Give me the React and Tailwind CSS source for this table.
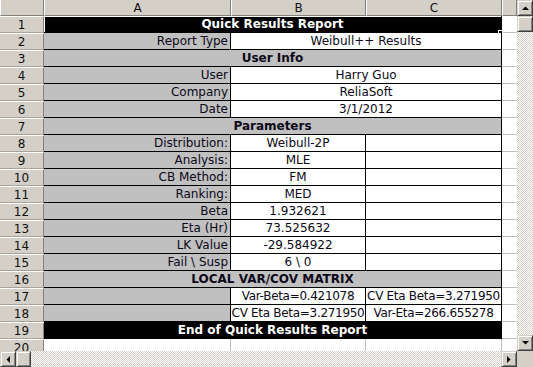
import React from "react";

const rows = [
  { t: "title", text: "Quick Results Report" },
  { t: "kv2", k: "Report Type", v: "Weibull++ Results" },
  { t: "section", text: "User Info" },
  { t: "kv2", k: "User", v: "Harry Guo" },
  { t: "kv2", k: "Company", v: "ReliaSoft" },
  { t: "kv2", k: "Date", v: "3/1/2012" },
  { t: "section", text: "Parameters" },
  { t: "kv", k: "Distribution:", v: "Weibull-2P" },
  { t: "kv", k: "Analysis:", v: "MLE" },
  { t: "kv", k: "CB Method:", v: "FM" },
  { t: "kv", k: "Ranking:", v: "MED" },
  { t: "kv", k: "Beta", v: "1.932621" },
  { t: "kv", k: "Eta (Hr)", v: "73.525632" },
  { t: "kv", k: "LK Value", v: "-29.584922" },
  { t: "kv", k: "Fail \\ Susp", v: "6 \\ 0" },
  { t: "section", text: "LOCAL VAR/COV MATRIX" },
  { t: "mat", b: "Var-Beta=0.421078", c: "CV Eta Beta=3.271950" },
  { t: "mat", b: "CV Eta Beta=3.271950", c: "Var-Eta=266.655278" },
  { t: "title", text: "End of Quick Results Report" },
];

const gridCols = "grid grid-cols-[44px_187px_135px_136px_15px]";

function RowHeader({ n }) {
  return (
    <div className="bg-[#d4d0c8] border-t border-t-white border-r border-r-[#808080] border-b border-b-[#a8a49c] flex items-center justify-center text-[12px] text-[#111] leading-none">
      {n}
    </div>
  );
}

function DCell() {
  return <div className="bg-white border-b border-b-[#c0c0c0]" />;
}

function Row({ r, n }) {
  const base = "h-[17px] border-b border-r border-black flex items-center whitespace-nowrap overflow-hidden";
  let cells;
  if (r.t === "title") {
    cells = (
      <div className={`${base} col-span-3 bg-black justify-center text-white font-bold ${n === 1 ? "shadow-[inset_1px_1px_0_#ffffff]" : ""}`}>
        {r.text}
      </div>
    );
  } else if (r.t === "section") {
    cells = (
      <div className={`${base} col-span-3 bg-[#c0c0c0] justify-center font-bold`}>{r.text}</div>
    );
  } else if (r.t === "kv2") {
    cells = (
      <>
        <div className={`${base} bg-[#c0c0c0] justify-end pr-[2px]`}>{r.k}</div>
        <div className={`${base} col-span-2 bg-white justify-center`}>{r.v}</div>
      </>
    );
  } else if (r.t === "kv") {
    cells = (
      <>
        <div className={`${base} bg-[#c0c0c0] justify-end pr-[2px]`}>{r.k}</div>
        <div className={`${base} bg-white justify-center`}>{r.v}</div>
        <div className={`${base} bg-white`} />
      </>
    );
  } else {
    cells = (
      <>
        <div className={`${base} bg-[#c0c0c0]`} />
        <div className={`${base} bg-white justify-center tracking-[-0.3px]`}>{r.b}</div>
        <div className={`${base} bg-white justify-center tracking-[-0.3px]`}>{r.c}</div>
      </>
    );
  }
  return (
    <div className={`${gridCols} h-[17px] relative`}>
      <RowHeader n={n} />
      {cells}
      <DCell />
      {n === 1 && (
        <div className="absolute left-[498px] top-[14px] w-[5px] h-[5px] bg-black border border-white" />
      )}
    </div>
  );
}

function Arrow({ dir }) {
  const pts = {
    up: "0,4 3.5,0.5 7,4",
    down: "0,0 7,0 3.5,3.5",
    left: "4,0 4,7 0.5,3.5",
    right: "0,0 0,7 3.5,3.5",
  }[dir];
  const w = dir === "up" || dir === "down" ? 7 : 4;
  const h = dir === "up" || dir === "down" ? 4 : 7;
  return (
    <svg width={w} height={h} viewBox={`0 0 ${w} ${h}`}>
      <polygon points={pts} fill="#000" />
    </svg>
  );
}

function Btn({ children, className = "" }) {
  return (
    <div
      className={`bg-[#d4d0c8] border border-t-[#d4d0c8] border-l-[#d4d0c8] border-r-[#404040] border-b-[#404040] shadow-[inset_1px_1px_0_#ffffff,inset_-1px_-1px_0_#808080] flex items-center justify-center shrink-0 ${className}`}
    >
      {children}
    </div>
  );
}

const track =
  "bg-[repeating-conic-gradient(#d4d0c8_0%_25%,#ffffff_0%_50%)] bg-[length:2px_2px]";

export default function App() {
  return (
    <div
      className="w-[533px] h-[367px] bg-white flex flex-col overflow-hidden text-[12px] text-[#0c0818] leading-none"
      style={{ fontFamily: "Tahoma, 'DejaVu Sans', sans-serif" }}
    >
      <div className="flex h-[351px]">
        <div className="w-[517px] flex flex-col overflow-hidden">
          <div className={`${gridCols} h-[16px] shrink-0`}>
            {["", "A", "B", "C", ""].map((l, i) => (
              <div
                key={i}
                className="bg-[#d4d0c8] border-l border-l-white border-r border-r-[#808080] border-b border-b-[#808080] flex items-center justify-center text-[12px] text-[#111]"
              >
                {l}
              </div>
            ))}
          </div>
          {rows.map((r, i) => (
            <Row key={i} r={r} n={i + 1} />
          ))}
          <div className={`${gridCols} flex-1`}>
            <div className="bg-[#d4d0c8] border-t border-t-white border-r border-r-[#808080] flex justify-center pt-[2px] text-[12px] text-[#111]">
              20
            </div>
            <div className="bg-white border-r border-r-[#c0c0c0]" />
            <div className="bg-white border-r border-r-[#c0c0c0]" />
            <div className="bg-white border-r border-r-[#c0c0c0]" />
            <div className="bg-white" />
          </div>
        </div>
        <div className="w-[16px] flex flex-col">
          <Btn className="h-[16px] w-[16px]">
            <Arrow dir="up" />
          </Btn>
          <Btn className="h-[16px] w-[16px]" />
          <div className={`flex-1 ${track}`} />
          <Btn className="h-[16px] w-[16px]">
            <Arrow dir="down" />
          </Btn>
        </div>
      </div>
      <div className="flex h-[16px]">
        <Btn className="h-[16px] w-[16px]">
          <Arrow dir="left" />
        </Btn>
        <Btn className="h-[16px] w-[15px]" />
        <div className={`flex-1 ${track}`} />
        <Btn className="h-[16px] w-[16px]">
          <Arrow dir="right" />
        </Btn>
        <div className="w-[16px] bg-[#d4d0c8]" />
      </div>
    </div>
  );
}
